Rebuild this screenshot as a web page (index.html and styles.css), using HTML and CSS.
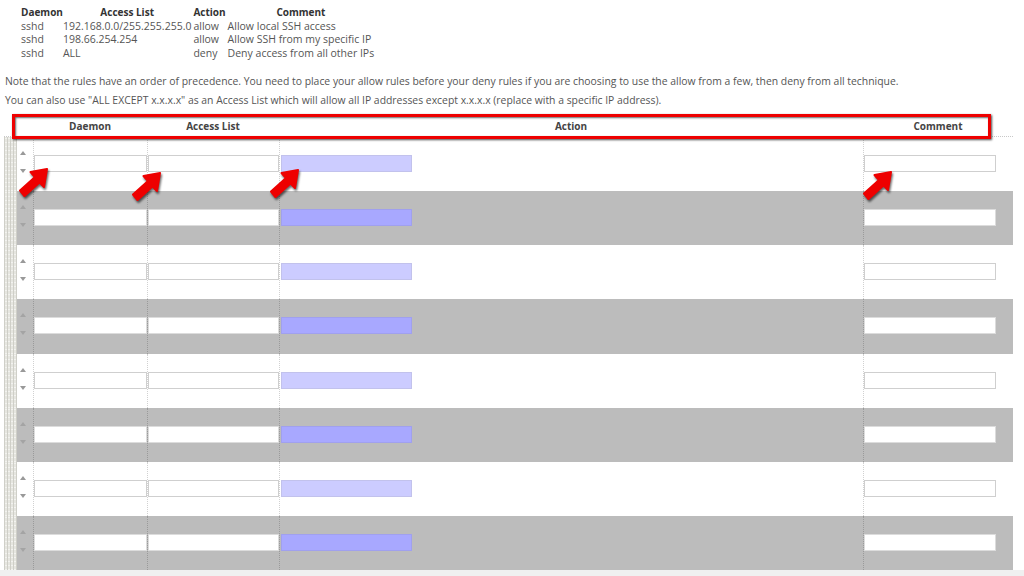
FILE: index.html
```html
<!DOCTYPE html>
<html>
<head>
<meta charset="utf-8">
<link rel="stylesheet" href="styles.css">
</head>
<body>
<table class="rules">
  <tr><th class="c-d">Daemon</th><th>Access List</th><th class="c-a">Action</th><th class="c-c">Comment</th></tr>
  <tr><td>sshd</td><td>192.168.0.0/255.255.255.0</td><td class="c-a">allow</td><td>Allow local SSH access</td></tr>
  <tr><td>sshd</td><td>198.66.254.254</td><td class="c-a">allow</td><td>Allow SSH from my specific IP</td></tr>
  <tr><td>sshd</td><td>ALL</td><td class="c-a">deny</td><td>Deny access from all other IPs</td></tr>
</table>
<div class="notes">
  <p>Note that the rules have an order of precedence. You need to place your allow rules before your deny rules if you are choosing to use the allow from a few, then deny from all technique.</p>
  <p>You can also use "ALL EXCEPT x.x.x.x" as an Access List which will allow all IP addresses except x.x.x.x (replace with a specific IP address).</p>
</div>
<div class="grid">
  <div class="row head">
    <div></div><div></div>
    <div class="hc">Daemon</div><div class="hc">Access List</div><div class="hc">Action</div><div class="hc">Comment</div>
  </div>
  <div class="row light"><div class="grip"></div><div class="spin"><i class="up"></i><i class="dn"></i></div><div class="cell"><span class="in d"></span></div><div class="cell"><span class="in a"></span></div><div class="cell"><span class="in act"></span></div><div class="cell"><span class="in c"></span></div></div>
  <div class="row dark"><div class="grip"></div><div class="spin"><i class="up"></i><i class="dn"></i></div><div class="cell"><span class="in d"></span></div><div class="cell"><span class="in a"></span></div><div class="cell"><span class="in act"></span></div><div class="cell"><span class="in c"></span></div></div>
  <div class="row light"><div class="grip"></div><div class="spin"><i class="up"></i><i class="dn"></i></div><div class="cell"><span class="in d"></span></div><div class="cell"><span class="in a"></span></div><div class="cell"><span class="in act"></span></div><div class="cell"><span class="in c"></span></div></div>
  <div class="row dark"><div class="grip"></div><div class="spin"><i class="up"></i><i class="dn"></i></div><div class="cell"><span class="in d"></span></div><div class="cell"><span class="in a"></span></div><div class="cell"><span class="in act"></span></div><div class="cell"><span class="in c"></span></div></div>
  <div class="row light"><div class="grip"></div><div class="spin"><i class="up"></i><i class="dn"></i></div><div class="cell"><span class="in d"></span></div><div class="cell"><span class="in a"></span></div><div class="cell"><span class="in act"></span></div><div class="cell"><span class="in c"></span></div></div>
  <div class="row dark"><div class="grip"></div><div class="spin"><i class="up"></i><i class="dn"></i></div><div class="cell"><span class="in d"></span></div><div class="cell"><span class="in a"></span></div><div class="cell"><span class="in act"></span></div><div class="cell"><span class="in c"></span></div></div>
  <div class="row light"><div class="grip"></div><div class="spin"><i class="up"></i><i class="dn"></i></div><div class="cell"><span class="in d"></span></div><div class="cell"><span class="in a"></span></div><div class="cell"><span class="in act"></span></div><div class="cell"><span class="in c"></span></div></div>
  <div class="row dark"><div class="grip"></div><div class="spin"><i class="up"></i><i class="dn"></i></div><div class="cell"><span class="in d"></span></div><div class="cell"><span class="in a"></span></div><div class="cell"><span class="in act"></span></div><div class="cell"><span class="in c"></span></div></div>
</div>
<div class="foot"></div>

<div class="redbox"></div>
<svg class="arrow a1" viewBox="0 0 34 32" width="34" height="32"><path d="M31 2 L14.5 5 L19 10 L4 23.5 L8.5 29 L23.5 15.5 L28 20 Z"/></svg>
<svg class="arrow a2" viewBox="0 0 34 32" width="34" height="32"><path d="M31 2 L14.5 5 L19 10 L4 23.5 L8.5 29 L23.5 15.5 L28 20 Z"/></svg>
<svg class="arrow a3" viewBox="0 0 34 32" width="34" height="32"><path d="M31 2 L14.5 5 L19 10 L4 23.5 L8.5 29 L23.5 15.5 L28 20 Z"/></svg>
<svg class="arrow a4" viewBox="0 0 34 32" width="34" height="32"><path d="M31 2 L14.5 5 L19 10 L4 23.5 L8.5 29 L23.5 15.5 L28 20 Z"/></svg>
</body>
</html>
```
FILE: styles.css
```css
html, body {
  margin: 0;
  padding: 0;
  background: #fff;
}
body {
  position: relative;
  width: 1024px;
  height: 576px;
  overflow: hidden;
  font-family: "Open Sans", "DejaVu Sans", sans-serif;
  font-size: 10px;
  color: #555;
}
.rules {
  border-collapse: collapse;
  margin: 6px 0 0 21px;
  line-height: 13.5px;
}
.rules th {
  font-weight: bold;
  font-size: 10px;
  color: #333;
  text-align: center;
  padding: 0;
}
.rules td {
  font-size: 10.5px;
  padding: 0;
  white-space: nowrap;
}
.rules .c-a {
  padding: 0 2px 0 2px;
}
.notes {
  padding: 12px 0 0 5px;
}
.notes p {
  margin: 0;
  font-size: 10.4px;
  line-height: 19px;
  white-space: nowrap;
}
.grid {
  margin: 5px 0 0 4px;
  width: 1009px;
}
.row {
  display: grid;
  grid-template-columns: 13px 16px 114px 132px 584px 150px;
  height: 54.125px;
}
.row.head {
  height: 22px;
  border-bottom: 1px dotted #c8c8c8;
  box-sizing: border-box;
}
.hc {
  font-weight: bold;
  color: #444;
  text-align: center;
  line-height: 22px;
}
.row.light { background: #fff; }
.row.dark { background: #bcbcbc; }
.grip {
  background-color: #e6e6e0;
  background-image: repeating-linear-gradient(90deg, #cfcfc8 0 1px, transparent 1px 3px),
                    repeating-linear-gradient(0deg, rgba(255,255,255,0.5) 0 1px, transparent 1px 4px);
}
.spin {
  position: relative;
}
.spin i {
  position: absolute;
  left: 3px;
  width: 0;
  height: 0;
  border-left: 3.5px solid transparent;
  border-right: 3.5px solid transparent;
}
.spin .up { top: 14px; border-bottom: 4px solid #999; }
.spin .dn { top: 32px; border-top: 4px solid #999; }
.dark .spin .up { border-bottom-color: #a4a4a4; }
.dark .spin .dn { border-top-color: #a4a4a4; }
.cell {
  border-left: 1px dotted rgba(0,0,0,0.18);
  display: flex;
  align-items: center;
}
.in {
  display: block;
  height: 17px;
  box-sizing: border-box;
  background: #fff;
  border: 1px solid #cfcfcf;
  margin-top: -1px;
}
.in.d { width: 113px; }
.in.a { width: 131px; }
.in.act { width: 131px; margin-left: 1px; background: #ccccff; border-color: #c2c2ec; }
.in.c { width: 132px; }
.dark .in { border-color: #dcdcdc; }
.dark .in.act { background: #a8a8ff; border-color: #a0a0ee; }
.foot {
  height: 10px;
  background: #f0f0f0;
}
.redbox {
  position: absolute;
  left: 12px;
  top: 114px;
  width: 979px;
  height: 25px;
  box-sizing: border-box;
  border: 3px solid #ee0000;
  box-shadow: 1px 1px 2px rgba(0,0,0,0.7), inset 1px 1px 2px rgba(0,0,0,0.6);
}
.arrow {
  position: absolute;
  filter: drop-shadow(1px 2px 1px rgba(0,0,0,0.6));
}
.arrow path {
  fill: #ee0000;
  stroke: #ee0000;
  stroke-width: 2;
  stroke-linejoin: round;
}
.a1 { left: 16px; top: 167px; }
.a2 { left: 129px; top: 171px; }
.a3 { left: 267px; top: 168px; }
.a4 { left: 860px; top: 170px; }
```
